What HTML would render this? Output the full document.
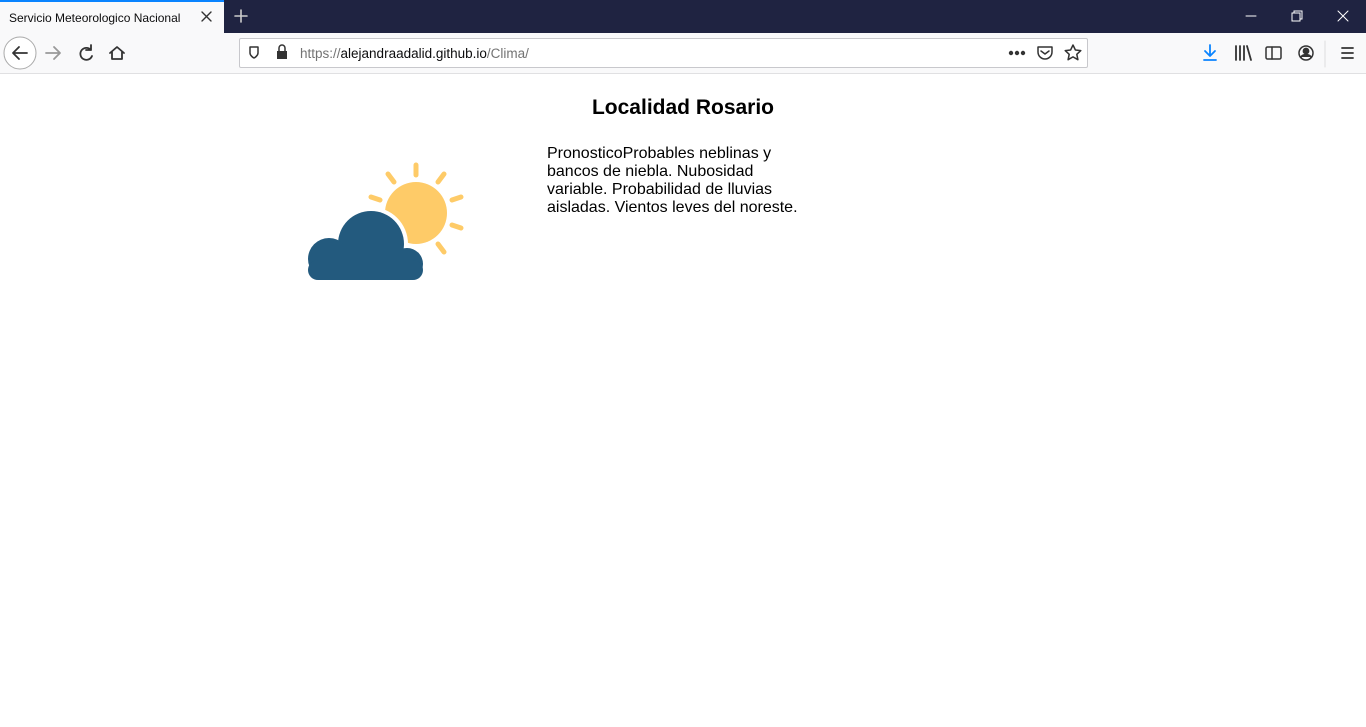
<!DOCTYPE html>
<html><head><meta charset="utf-8"><style>
*{margin:0;padding:0;box-sizing:border-box}
body{width:1366px;height:727px;overflow:hidden;background:#fff;font-family:"Liberation Sans",Arial,sans-serif;position:relative}
.top{position:absolute;left:0;top:0;width:1366px;height:33px;background:#1f2341}
.tab{position:absolute;left:0;top:0;width:224px;height:33px;background:#f9f9fa;border-top:2px solid #0a84ff}
.tab span{position:absolute;left:9px;top:9px;font-size:12px;color:#0c0c0d}
.nav{position:absolute;left:0;top:33px;width:1366px;height:41px;background:#f9f9fa;border-bottom:1px solid #e0e0e2}
.url{position:absolute;left:239px;top:38px;width:849px;height:30px;background:#fff;border:1px solid #c8c8cc;border-radius:2px}
.url .t{position:absolute;left:60px;top:7px;font-size:13.5px;color:#0c0c0d}
.url .g{color:#737373}
h1{position:absolute;left:0;width:1366px;top:96px;text-align:center;font-size:21px;font-weight:bold;color:#000}
p{position:absolute;left:547px;top:145px;width:260px;font-size:16px;line-height:18px;color:#000}
svg{position:absolute}
</style></head><body>
<div class="top"></div>
<div class="tab"><span>Servicio Meteorologico Nacional</span></div>
<svg style="left:0;top:0" width="1366" height="33" stroke-linecap="round">
<path d="M202 12l9 9M211 12l-9 9" stroke="#333" stroke-width="1.4"/>
<path d="M241 10v12M235 16h12" stroke="#ccc" stroke-width="1.6"/>
<path d="M1246 16h10" stroke="#fff" stroke-width="1"/>
<rect x="1292" y="13" width="8" height="8" fill="none" stroke="#fff"/><path d="M1294 13v-2h8v8h-2" fill="none" stroke="#fff"/>
<path d="M1338 11l10 10M1348 11l-10 10" stroke="#fff" stroke-width="1"/>
</svg>
<div class="nav"></div>
<div class="url"><div class="t"><span class="g">https://</span>alejandraadalid.github.io<span class="g">/Clima/</span></div></div>
<svg style="left:0;top:33px" width="1366" height="41" fill="none" stroke="#333" stroke-width="1.8" stroke-linecap="round" stroke-linejoin="round">
<circle cx="20" cy="20" r="16" stroke="#aaa" stroke-width="1" fill="#fff"/>
<path d="M13 20h14M19 14l-6 6 6 6"/>
<path d="M46 20h14M54 14l6 6-6 6" stroke="#999"/>
<path d="M91 17a6 6 0 1 0 1 6M91 12v5h-5"/>
<path d="M110 20l7-6 7 6M112 19v7h10v-7"/>
<path d="M250 14h8v6c0 3-4 5-4 5s-4-2-4-5z" stroke-width="1.5"/>
<rect x="277" y="18" width="10" height="8" fill="#333" stroke="none"/><path d="M279 18v-3a3 3 0 0 1 6 0v3" stroke-width="1.5"/>
<circle cx="1011" cy="20" r="1.3" fill="#333"/><circle cx="1017" cy="20" r="1.3" fill="#333"/><circle cx="1023" cy="20" r="1.3" fill="#333"/>
<path d="M1038 14h14v5a7 7 0 0 1-14 0z M1041 18l4 3 4-3" stroke-width="1.5"/>
<path d="M1073 12l2.4 5 5.4.6-4 3.7 1.1 5.4-4.9-2.8-4.9 2.8 1.1-5.4-4-3.7 5.4-.6z" stroke-width="1.5"/>
<path d="M1210 12v11M1205 18l5 5 5-5M1204 27h12" stroke="#0a84ff"/>
<path d="M1236 13v14M1240 13v14M1244 13v14M1247 13l4 14"/>
<rect x="1266" y="14" width="15" height="12" rx="1.5" stroke-width="1.5"/><path d="M1272 14v12" stroke-width="1.5"/>
<circle cx="1306" cy="20" r="7" stroke-width="1.5"/><circle cx="1306" cy="18" r="2.5" fill="#333"/><path d="M1301 24c2-3 8-3 10 0" fill="#333"/>
<path d="M1325 8v26" stroke="#ddd" stroke-width="1"/>
<path d="M1342 15h11M1342 20h11M1342 25h11"/>
</svg>
<h1>Localidad Rosario</h1>
<svg style="left:300px;top:150px" width="180" height="140">
<g stroke="#fecb68" stroke-width="5" stroke-linecap="round" transform="translate(116,63)">
<path d="M0 -38V-48"/>
<path d="M22 -31L28 -39"/>
<path d="M-22 -31L-28 -39"/>
<path d="M36 -13L45 -16"/>
<path d="M-36 -13L-45 -16"/>
<path d="M36 12L45 15"/>
<path d="M22 31L28 39"/>
</g>
<circle cx="116" cy="63" r="31" fill="#fecb68"/>
<circle cx="71" cy="94" r="37" fill="#fff"/>
<g fill="#235a7e">
<circle cx="71" cy="94" r="33"/>
<circle cx="29" cy="109" r="21"/>
<circle cx="107" cy="114" r="16"/>
<rect x="8" y="110" width="115" height="20" rx="10"/>
<rect x="29" y="100" width="80" height="30"/>
</g>
</svg>
<p>PronosticoProbables neblinas y bancos de niebla. Nubosidad variable. Probabilidad de lluvias aisladas. Vientos leves del noreste.</p>
</body></html>
